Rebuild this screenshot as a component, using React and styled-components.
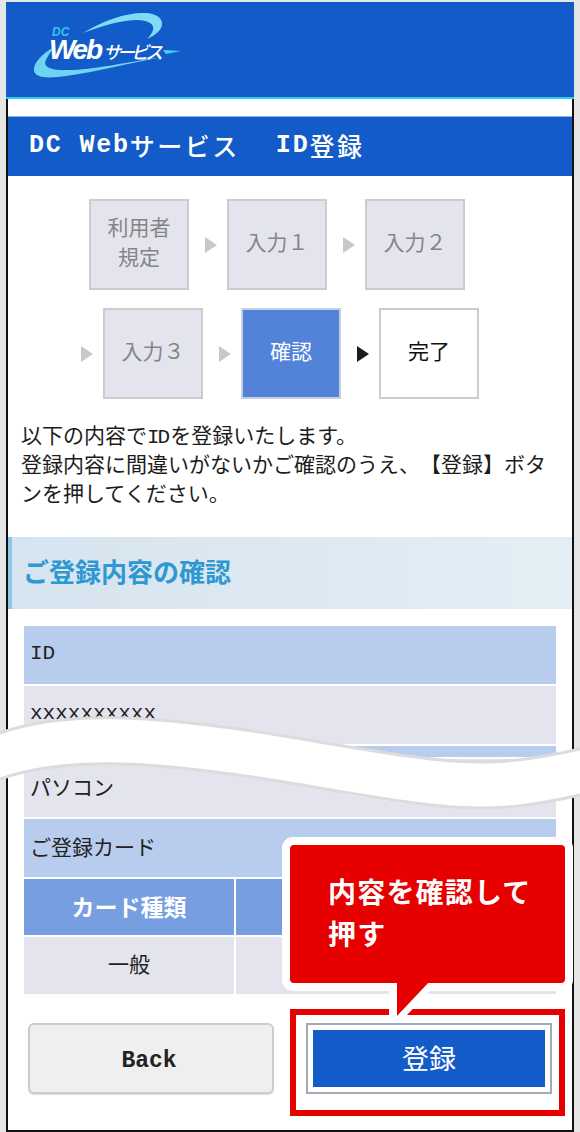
import React from 'react'
import styled, { createGlobalStyle } from 'styled-components'

const MONO = `'Liberation Mono', 'Noto Sans CJK JP', monospace`
const BLUE = '#135bc8'
const RED = '#e60000'

const GlobalStyle = createGlobalStyle`
  html, body {
    margin: 0;
    padding: 0;
    background: #fff;
  }
`

const Page = styled.div`
  position: relative;
  width: 580px;
  height: 1132px;
  box-sizing: border-box;
  padding: 2px 6px 0;
  overflow: hidden;
  background: #e6e6e6;
  font-family: ${MONO};
  font-size: 21px;
  color: #222;
  text-spacing-trim: space-all;
`

const Header = styled.header`
  height: 89px;
  background: ${BLUE};
  border-bottom: 2px solid #2fd0f0;
  padding: 6px 0 0 20px;
  display: flex;
  align-items: flex-start;
`

const Body = styled.main`
  height: 1033px;
  box-sizing: border-box;
  background: #fff;
  border-left: 2px solid #111;
  border-right: 2px solid #111;
  border-bottom: 2px solid #111;
  padding-top: 17px;
`

const TitleBar = styled.h1`
  margin: 0;
  height: 60px;
  box-sizing: border-box;
  display: flex;
  align-items: center;
  padding: 0 0 2px 21px;
  background: ${BLUE};
  border-top: 1px solid #8fb4ea;
  color: #fff;
  font-size: 25px;
  font-weight: 500;
  letter-spacing: 2.5px;
  white-space: pre;
`

const TitleLatin = styled.span`
  font-weight: 700;
  letter-spacing: 1.8px;
  margin-left: ${p => p.$gap || 0}px;
`

const Steps = styled.div`
  display: flex;
  flex-direction: column;
  gap: 18px;
  margin-top: 23px;
`

const StepRow = styled.div`
  display: flex;
  align-items: center;
  padding-left: ${p => p.$indent}px;
`

const StepBox = styled.div`
  width: 100px;
  height: 91px;
  box-sizing: border-box;
  display: flex;
  align-items: center;
  justify-content: center;
  text-align: center;
  line-height: 30px;
  border: 2px solid ${p => (p.$state === 'active' ? '#c4d0de' : '#cccccc')};
  background: ${p => ({ done: '#e4e4ee', active: '#5383d8', next: '#fff' }[p.$state])};
  color: ${p => ({ done: '#858585', active: '#fff', next: '#111' }[p.$state])};
`

const Arrow = styled.span`
  width: 0;
  height: 0;
  margin: 0 10px 0 16px;
  border-style: solid;
  border-width: 8px 0 8px 12px;
  border-color: transparent transparent transparent ${p => (p.$dark ? '#1c1c1c' : '#c8c8c8')};
`

const Intro = styled.p`
  margin: 24px 0 0;
  padding-left: 13px;
  line-height: 29px;
  color: #1c1c1c;
  white-space: nowrap;
`

const NarrowLatin = styled.span`
  letter-spacing: -2px;
  margin-right: 2px;
`

const SectionHead = styled.h2`
  margin: 27px 0 0;
  height: 72px;
  box-sizing: border-box;
  display: flex;
  align-items: center;
  padding: 0 0 4px 11px;
  background: linear-gradient(90deg, #d6e4ef, #e4eef5);
  border-left: 4px solid #8ec6e6;
  color: #2e98d2;
  font-size: 26px;
  font-weight: 700;
`

const Table = styled.div`
  display: flex;
  flex-direction: column;
  gap: 2px;
  margin: 17px 16px 0;
`

const Row = styled.div`
  height: ${p => p.$height || 58}px;
  box-sizing: border-box;
  display: flex;
  align-items: center;
  padding: 0 0 ${p => (p.$height ? 0 : 4)}px 6px;
  overflow: hidden;
  background: ${p => (p.$label ? '#b8cdee' : '#e4e4ee')};
`

const Grid = styled.div`
  display: grid;
  grid-template-columns: 210px 1fr;
  gap: 2px;
`

const HeadCell = styled.div`
  height: 56px;
  box-sizing: border-box;
  padding-bottom: 3px;
  display: flex;
  align-items: center;
  justify-content: center;
  background: #769ee0;
  color: #fff;
  font-size: 23px;
  font-weight: 700;
`

const Cell = styled.div`
  height: 57px;
  box-sizing: border-box;
  padding-bottom: 5px;
  display: flex;
  align-items: center;
  justify-content: center;
  background: #e4e4ee;
`

const Buttons = styled.div`
  display: flex;
  justify-content: space-between;
  margin: 29px 20px 0;
`

const BackButton = styled.button`
  width: 246px;
  height: 71px;
  box-sizing: border-box;
  padding: 5px 10px 0 6px;
  border: 2px solid #cccccc;
  border-radius: 6px;
  background: #efefef;
  color: #222;
  font-family: ${MONO};
  font-size: 23px;
  font-weight: 700;
  box-shadow: 0 1px 1px #ddd;
`

const SubmitFrame = styled.div`
  width: 246px;
  height: 71px;
  box-sizing: border-box;
  padding: 5px;
  border: 2px solid #a2aab8;
  background: #fff;
`

const SubmitButton = styled.button`
  width: 100%;
  height: 100%;
  padding-bottom: 3px;
  border: 0;
  background: ${BLUE};
  color: #fff;
  font-family: 'Noto Sans CJK JP', sans-serif;
  font-size: 27px;
`

const Highlight = styled.div`
  position: absolute;
  left: 290px;
  top: 1009px;
  width: 275px;
  height: 107px;
  box-sizing: border-box;
  border: 6px solid ${RED};
`

const Callout = styled.div`
  position: absolute;
  left: 290px;
  top: 845px;
  width: 275px;
  height: 138px;
  box-sizing: border-box;
  padding: 25px 0 0 38px;
  border-radius: 4px;
  background: ${RED};
  box-shadow: 0 0 0 8px #fff;
  color: #fff;
  font-family: 'Noto Sans CJK JP', sans-serif;
  font-size: 28px;
  font-weight: 700;
  letter-spacing: 1.2px;
  line-height: 42px;
`

const CalloutTail = styled.svg`
  position: absolute;
  left: 385px;
  top: 980px;
`

const Wave = styled.svg`
  position: absolute;
  left: 0;
  top: 700px;
`

const Logo = () => (
  <svg width="170" height="80" viewBox="26 8 170 80">
    <path d="M83 33 C104 20 128 12 146 13 C162 14 166 24 158 32 C155 35 151 37 147 39 C153 33 156 27 150 23 C140 16 112 22 83 33 Z" fill="#7fdcf4" />
    <path d="M54 47 C42 54 33 63 34 71 C36 79 52 78 66 76 C96 72 130 63 162 57 C128 62 92 70 68 70 C52 71 42 67 46 60 C48 56 51 51 54 47 Z" fill="#6fd4f2" />
    <path d="M163 50 L181 51 L166 54 Z" fill="#4fd0f0" />
    <text x="52" y="36" fontFamily="'Liberation Sans', sans-serif" fontStyle="italic" fontWeight="700" fontSize="12" fill="#38c4ee">DC</text>
    <text x="49" y="59" fontFamily="'Liberation Sans', sans-serif" fontStyle="italic" fontWeight="700" fontSize="28" fill="#fff" textLength="54">Web</text>
    <text x="103" y="59" fontFamily="'Noto Sans CJK JP', sans-serif" fontStyle="italic" fontWeight="500" fontSize="18" fill="#fff" textLength="60">サービス</text>
  </svg>
)

const App = () => (
  <Page>
    <GlobalStyle />
    <Header>
      <Logo />
    </Header>
    <Body>
      <TitleBar>
        <TitleLatin>DC Web</TitleLatin>サービス<TitleLatin $gap={36}>ID</TitleLatin>登録
      </TitleBar>
      <Steps>
        <StepRow $indent={81}>
          <StepBox $state="done">利用者<br />規定</StepBox>
          <Arrow />
          <StepBox $state="done">入力１</StepBox>
          <Arrow />
          <StepBox $state="done">入力２</StepBox>
        </StepRow>
        <StepRow $indent={57}>
          <Arrow />
          <StepBox $state="done">入力３</StepBox>
          <Arrow />
          <StepBox $state="active">確認</StepBox>
          <Arrow $dark />
          <StepBox $state="next">完了</StepBox>
        </StepRow>
      </Steps>
      <Intro>
        以下の内容で<NarrowLatin>ID</NarrowLatin>を登録いたします。<br />
        登録内容に間違いがないかご確認のうえ、【登録】ボタ<br />
        ンを押してください。
      </Intro>
      <SectionHead>ご登録内容の確認</SectionHead>
      <Table>
        <Row $label>ID</Row>
        <Row>xxxxxxxxxx</Row>
        <Row $label $height={11} />
        <Row>パソコン</Row>
        <Row $label>ご登録カード</Row>
        <Grid>
          <HeadCell>カード種類</HeadCell>
          <HeadCell />
          <Cell>一般</Cell>
          <Cell />
        </Grid>
      </Table>
      <Buttons>
        <BackButton>Back</BackButton>
        <SubmitFrame>
          <SubmitButton>登録</SubmitButton>
        </SubmitFrame>
      </Buttons>
    </Body>
    <Wave width="580" height="120" viewBox="0 700 580 120">
      <path d="M0 733 C60 712 140 712 290 737 S480 772 580 749 L580 795 C480 818 400 806 290 783 C140 758 60 758 0 779 Z" fill="#fff" />
      <path d="M0 733 C60 712 140 712 290 737 S480 772 580 749" fill="none" stroke="#dcdcdc" strokeWidth="3" />
      <path d="M0 779 C60 758 140 758 290 783 S480 818 580 795" fill="none" stroke="#dcdcdc" strokeWidth="3" />
    </Wave>
    <Highlight />
    <Callout>内容を確認して<br />押す</Callout>
    <CalloutTail width="60" height="44" viewBox="385 980 60 44">
      <path d="M389 983 L389 1016 L404 1018 L438 983 Z" fill="#fff" />
      <path d="M397 981 L397 1016 L430 981 Z" fill={RED} />
    </CalloutTail>
  </Page>
)

export default App
